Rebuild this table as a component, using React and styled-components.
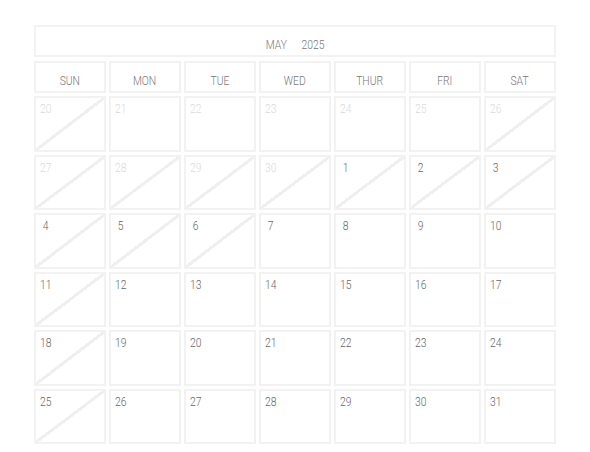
import React from "react";
import styled, { createGlobalStyle } from "styled-components";

const GlobalStyle = createGlobalStyle`
  body {
    margin: 0;
    background: #fff;
    font-family: Roboto, "Liberation Sans", sans-serif;
  }
`;

const Calendar = styled.div`
  width: 522px;
  margin: 25px 0 0 34px;
  display: flex;
  flex-direction: column;
  gap: 4px;
  color: #777;
  font-weight: 300;
`;

// narrow look of the original face
const Narrow = styled.span`
  display: inline-block;
  transform: scaleX(0.86);
  transform-origin: center;
`;

const MonthBar = styled.div`
  box-sizing: border-box;
  height: 32px;
  border: 2px solid #f2f2f2;
  padding-top: 11px;
  text-align: center;
  font-size: 12px;
  line-height: 14px;
  word-spacing: 14px;
`;

const HeadRow = styled.div`
  display: grid;
  grid-template-columns: repeat(7, 72px);
  column-gap: 3px;
  margin-bottom: -1px;
`;

const DayName = styled.div`
  box-sizing: border-box;
  height: 32px;
  border: 2px solid #f2f2f2;
  padding-top: 11px;
  text-align: center;
  font-size: 12px;
  line-height: 14px;
`;

const Grid = styled.div`
  display: grid;
  grid-template-columns: repeat(7, 72px);
  grid-auto-rows: 55.5px;
  column-gap: 3px;
  row-gap: 3px;
`;

const Cell = styled.div`
  box-sizing: border-box;
  border: 2px solid #f2f2f2;
  padding: 0 0 0 3px;
  background: ${({ crossed }) =>
    crossed
      ? "linear-gradient(to bottom right, transparent calc(50% - 1.5px), #efefef calc(50% - 1.5px), #efefef calc(50% + 1.5px), transparent calc(50% + 1.5px))"
      : "transparent"};
`;

const DateNum = styled.span`
  display: inline-block;
  width: 13px;
  text-align: center;
  font-size: 12px;
  line-height: 14px;
  transform: scaleX(0.86);
  color: ${({ faded }) => (faded ? "#dadada" : "#666")};
`;

const dayNames = ["SUN", "MON", "TUE", "WED", "THUR", "FRI", "SAT"];

const crossedDays = new Set([
  "p20", "p26", "p27", "p28", "p29", "p30",
  "1", "2", "3", "4", "5", "6", "11", "18", "25",
]);

const cells = [];
for (let d = 20; d <= 30; d++) cells.push({ n: d, faded: true, key: "p" + d });
for (let d = 1; d <= 31; d++) cells.push({ n: d, faded: false, key: String(d) });

const App = () => (
  <>
    <GlobalStyle />
    <Calendar>
      <MonthBar>
        <Narrow>MAY 2025</Narrow>
      </MonthBar>
      <HeadRow>
        {dayNames.map((name) => (
          <DayName key={name}>
            <Narrow>{name}</Narrow>
          </DayName>
        ))}
      </HeadRow>
      <Grid>
        {cells.map((c) => (
          <Cell key={c.key} crossed={crossedDays.has(c.key)}>
            <DateNum faded={c.faded}>{c.n}</DateNum>
          </Cell>
        ))}
      </Grid>
    </Calendar>
  </>
);

export default App;
